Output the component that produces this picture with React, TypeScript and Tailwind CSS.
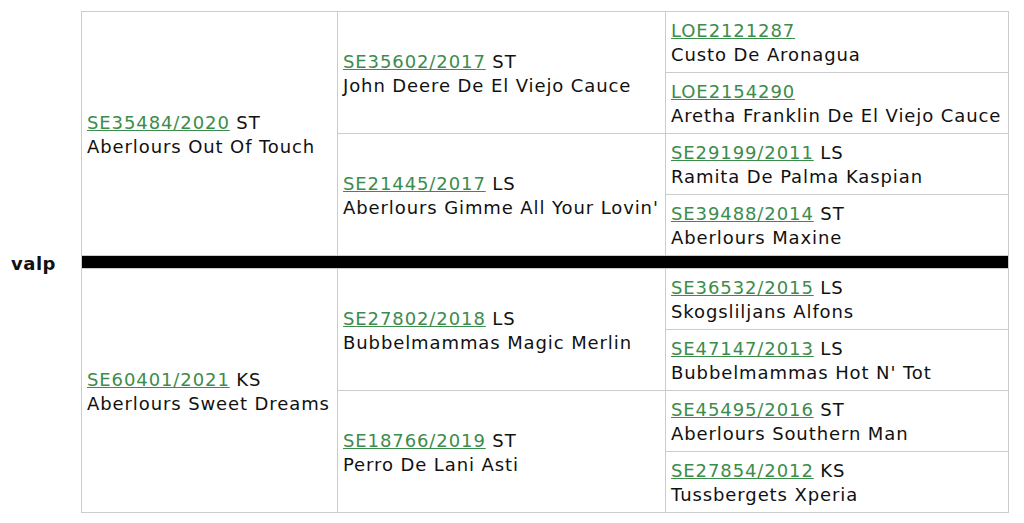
import React from 'react';

// 型定義
interface Dog {
  reg: string;
  title?: string;
  name: string;
}

const sire: Dog = { reg: 'SE35484/2020', title: 'ST', name: 'Aberlours Out Of Touch' };
const dam: Dog = { reg: 'SE60401/2021', title: 'KS', name: 'Aberlours Sweet Dreams' };

const sireParents: Dog[] = [
  { reg: 'SE35602/2017', title: 'ST', name: 'John Deere De El Viejo Cauce' },
  { reg: 'SE21445/2017', title: 'LS', name: "Aberlours Gimme All Your Lovin'" },
];
const damParents: Dog[] = [
  { reg: 'SE27802/2018', title: 'LS', name: 'Bubbelmammas Magic Merlin' },
  { reg: 'SE18766/2019', title: 'ST', name: 'Perro De Lani Asti' },
];

const sireGrand: Dog[] = [
  { reg: 'LOE2121287', name: 'Custo De Aronagua' },
  { reg: 'LOE2154290', name: 'Aretha Franklin De El Viejo Cauce' },
  { reg: 'SE29199/2011', title: 'LS', name: 'Ramita De Palma Kaspian' },
  { reg: 'SE39488/2014', title: 'ST', name: 'Aberlours Maxine' },
];
const damGrand: Dog[] = [
  { reg: 'SE36532/2015', title: 'LS', name: 'Skogsliljans Alfons' },
  { reg: 'SE47147/2013', title: 'LS', name: "Bubbelmammas Hot N' Tot" },
  { reg: 'SE45495/2016', title: 'ST', name: 'Aberlours Southern Man' },
  { reg: 'SE27854/2012', title: 'KS', name: 'Tussbergets Xperia' },
];

const cell = 'border border-[#cccccc] px-[5px] pt-[7px] pb-[5px] align-middle';

function DogInfo({ dog }: { dog: Dog }) {
  return (
    <>
      <a href="#" className="text-[#3c8c4c] underline">{dog.reg}</a>
      {dog.title ? ` ${dog.title}` : ''}
      <br />
      {dog.name}
    </>
  );
}

function Half({ parent, parents, grand }: { parent: Dog; parents: Dog[]; grand: Dog[] }) {
  return (
    <>
      <tr>
        <td rowSpan={4} className={cell}><DogInfo dog={parent} /></td>
        <td rowSpan={2} className={cell}><DogInfo dog={parents[0]} /></td>
        <td className={cell}><DogInfo dog={grand[0]} /></td>
      </tr>
      <tr>
        <td className={cell}><DogInfo dog={grand[1]} /></td>
      </tr>
      <tr>
        <td rowSpan={2} className={cell}><DogInfo dog={parents[1]} /></td>
        <td className={cell}><DogInfo dog={grand[2]} /></td>
      </tr>
      <tr>
        <td className={cell}><DogInfo dog={grand[3]} /></td>
      </tr>
    </>
  );
}

export default function App() {
  return (
    <div className="min-h-screen bg-white font-['DejaVu_Sans',Verdana,sans-serif] text-[18px] leading-[24px] tracking-[0.9px] text-[#111] pt-[11px]">
      <div className="flex items-center">
        <div className="w-[81px] pl-[11px] pt-[4px] font-bold tracking-[0.5px] text-[18px]">valp</div>
        <table className="border-collapse border border-[#cccccc] table-fixed w-[927px]">
          <colgroup>
            <col className="w-[256px]" />
            <col className="w-[328px]" />
            <col className="w-[343px]" />
          </colgroup>
          <tbody>
            <Half parent={sire} parents={sireParents} grand={sireGrand} />
            <tr>
              <td colSpan={3} className="border border-[#cccccc] bg-black h-[13px] p-0"></td>
            </tr>
            <Half parent={dam} parents={damParents} grand={damGrand} />
          </tbody>
        </table>
      </div>
    </div>
  );
}
